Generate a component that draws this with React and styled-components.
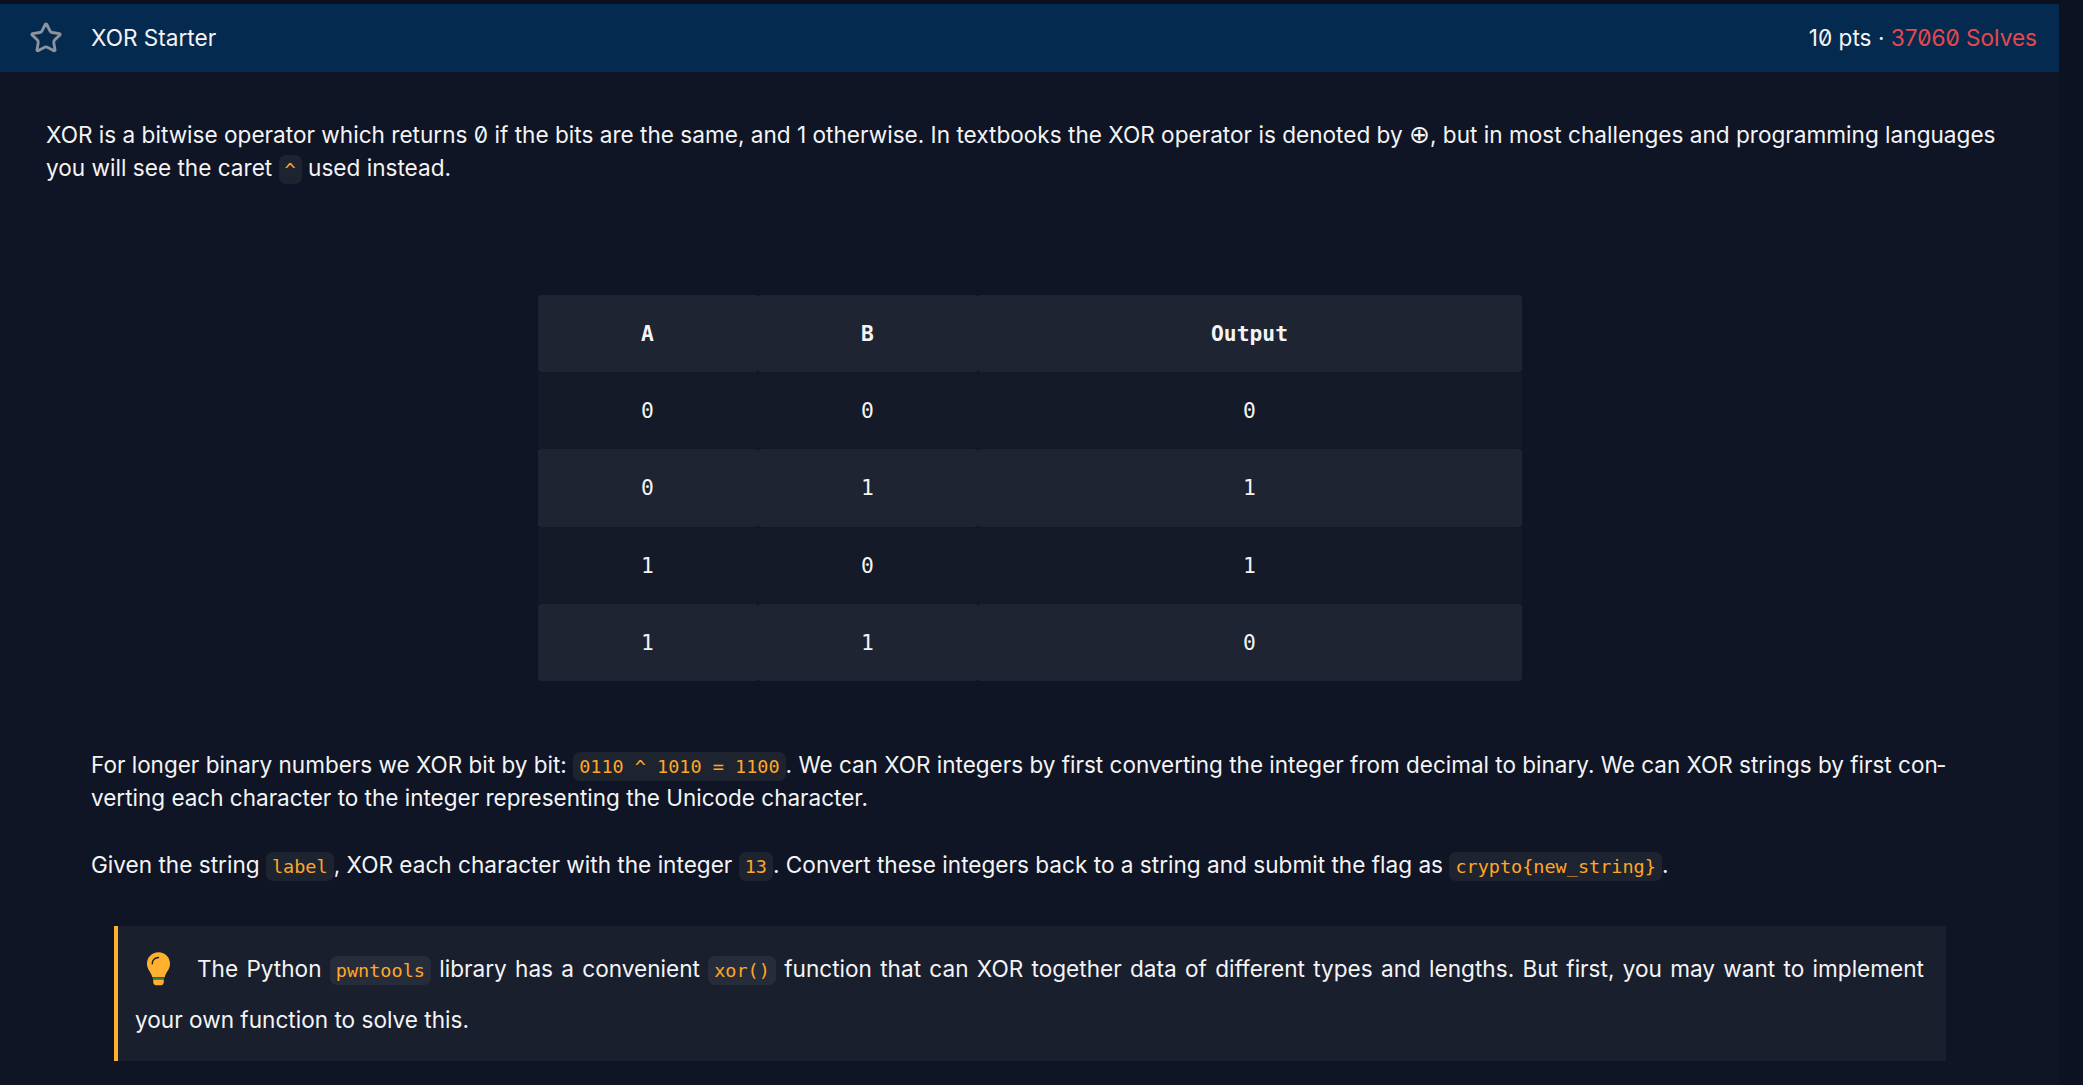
import React from 'react'
import styled, { createGlobalStyle } from 'styled-components'
import { Star } from 'lucide-react'

const GlobalStyle = createGlobalStyle`
  html, body {
    margin: 0;
    height: 100%;
    overflow: hidden;
    background: #0c1222;
  }
`

const Page = styled.div`
  width: 2059px;
  height: 1085px;
  overflow: hidden;
  padding-top: 4px;
  box-sizing: border-box;
  background: #0a0e1e;
  color: #f4f4f5;
  font-family: Inter, "Liberation Sans", sans-serif;
  font-feature-settings: "zero";
  font-size: 22.6px;
`
const Header = styled.div`
  height: 68px;
  background: #052a4f;
  display: flex;
  align-items: center;
  padding: 0 22px 0 29px;
`
const StarIcon = styled(Star)`
  width: 34px;
  height: 34px;
  color: #8d949c;
  margin-right: 28px;
`
const Title = styled.div`
  flex: 1;
  margin-bottom: 2px;
`
const Points = styled.div`
  margin-bottom: 2px;
`
const Solves = styled.span`
  color: #e5484d;
`
const Body = styled.div`
  background: #0f1525;
  height: 1013px;
  padding: 46px 46px 0;
  box-sizing: border-box;
`
const Intro = styled.p`
  margin: 0;
  line-height: 33px;
`
const MathGlyph = styled.span`
  font-family: "DejaVu Sans", sans-serif;
  font-size: 25px;
  line-height: 0;
`
const Code = styled.code`
  font-family: "DejaVu Sans Mono", monospace;
  font-size: 18.5px;
  line-height: 1;
  color: #ffa726;
  background: ${p => (p.$raised ? '#272c3a' : '#1e2330')};
  border-radius: 7px;
  padding: 4px 6px;
  font-feature-settings: normal;
`
const Table = styled.div`
  width: 984px;
  margin: 111px auto 0;
  display: grid;
  grid-template-columns: 220px 220px 544px;
  font-family: "DejaVu Sans Mono", monospace;
  font-size: 21.3px;
  font-feature-settings: normal;
`
const Cell = styled.div`
  height: 77.2px;
  display: flex;
  align-items: center;
  justify-content: center;
  border-radius: 3px;
  background: ${p => (p.$striped ? '#1e2432' : '#141a27')};
  font-weight: ${p => (p.$head ? 700 : 400)};
`
const Content = styled.div`
  padding: 67px 67px 0 45px;
`
const Para = styled.p`
  margin: 0 0 33px;
  line-height: 33.5px;
  font-size: ${p => (p.$tight ? '22.5px' : 'inherit')};
`
const Callout = styled.div`
  margin: 45px 0 0 23px;
  box-sizing: border-box;
  border-left: 4px solid #ffb02e;
  background: #1a1f2e;
  padding: 18px 22px 16px 17px;
  line-height: 50.5px;
  text-align: justify;
`
const Bulb = styled.svg`
  width: 25px;
  height: 35px;
  vertical-align: -9px;
  margin: 0 26px 0 11px;
`

const rows = [
  ['A', 'B', 'Output'],
  ['0', '0', '0'],
  ['0', '1', '1'],
  ['1', '0', '1'],
  ['1', '1', '0'],
]

const App = () => {
  return (
    <Page>
      <GlobalStyle />
      <Header>
        <StarIcon strokeWidth={2} />
        <Title>XOR Starter</Title>
        <Points>10 pts · <Solves>37060 Solves</Solves></Points>
      </Header>
      <Body>
        <Intro>
          XOR is a bitwise operator which returns 0 if the bits are the same, and 1 otherwise. In textbooks the XOR operator is denoted by <MathGlyph>⊕</MathGlyph>, but in most challenges and programming languages you will see the caret <Code>^</Code> used instead.
        </Intro>
        <Table>
          {rows.map((row, i) =>
            row.map((val, j) => (
              <Cell key={`${i}-${j}`} $striped={i % 2 === 0} $head={i === 0}>{val}</Cell>
            ))
          )}
        </Table>
        <Content>
          <Para $tight>
            For longer binary numbers we XOR bit by bit: <Code>0110 ^ 1010 = 1100</Code>. We can XOR integers by first converting the integer from decimal to binary. We can XOR strings by first con{'\u00AD'}verting each character to the integer representing the Unicode character.
          </Para>
          <Para>
            Given the string <Code>label</Code>, XOR each character with the integer <Code>13</Code>. Convert these integers back to a string and submit the flag as <Code>crypto{'{'}new_string{'}'}</Code>.
          </Para>
          <Callout>
            <Bulb viewBox="0 0 26 36">
              <path d="M13 1C6 1 1 6.4 1 13c0 6 4.400 8.600 5.600 14h12.800C20.600 21.600 25 19 25 13 25 6.400 20 1 13 1z" fill="#ffb02e" />
              <path d="M6.500 13c0-3.600 2.800-6.500 6.500-6.500" fill="none" stroke="#1a1f2e" strokeWidth="1.500" strokeLinecap="round" />
              <path d="M7 27.500h12v1.500H7z" fill="#3d7a4a" />
              <path d="M7.500 29.500h11V32c0 2-1.500 3.500-3 3.500h-5c-1.500 0-3-1.500-3-3.500z" fill="#ffb02e" />
            </Bulb>
            The Python <Code $raised>pwntools</Code> library has a convenient <Code $raised>xor()</Code> function that can XOR together data of different types and lengths. But first, you may want to implement your own function to solve this.
          </Callout>
        </Content>
      </Body>
    </Page>
  )
}

export default App
